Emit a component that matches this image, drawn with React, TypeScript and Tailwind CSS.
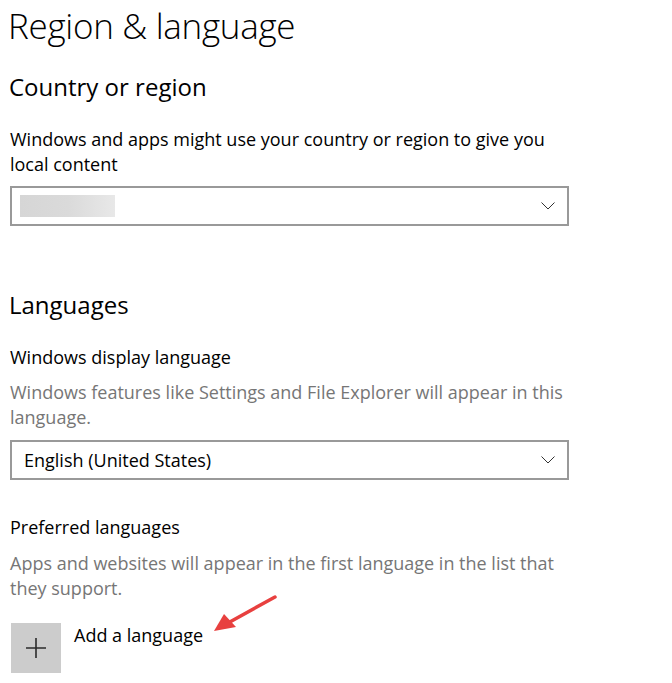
import React from 'react';

const font = { fontFamily: '"Open Sans", "Noto Sans", sans-serif' };

const Chevron = () => (
  <svg width="14" height="8" viewBox="0 0 14 8" className="shrink-0">
    <path d="M0.5 0.5 L7 7 L13.5 0.5" fill="none" stroke="#333" strokeWidth="1" />
  </svg>
);

const Dropdown: React.FC<{ children?: React.ReactNode }> = ({ children }) => (
  <div className="flex items-center justify-between w-[559px] h-[40px] border-2 border-[#999999] bg-white pl-[8px] pr-[12px]">
    <div className="flex items-center">{children}</div>
    <Chevron />
  </div>
);

export default function App() {
  return (
    <div className="relative w-[672px] h-[683px] bg-white overflow-hidden text-black" style={font}>
      <div className="pl-[10px] pt-[6px]">
        <h1 className="text-[35px] font-light leading-[40px] tracking-[-0.3px] ml-[-2px]">
          Region &amp; language
        </h1>

        <h2 className="mt-[25px] text-[24px] font-normal leading-[32px] ml-[-1px]">Country or region</h2>

        <p className="mt-[24px] text-[18px] leading-[25px] w-[560px]">
          Windows and apps might use your country or region to give you local content
        </p>
        <div className="mt-[9px]">
          <Dropdown>
            <div className="w-[95px] h-[22px] bg-gradient-to-r from-[#d6d6d6] via-[#dadada] to-[#e8e8e8]" />
          </Dropdown>
        </div>

        <h2 className="mt-[63px] text-[24px] font-normal leading-[32px] ml-[-1px]">Languages</h2>

        <p className="mt-[24px] text-[18px] leading-[25px]">Windows display language</p>
        <p className="mt-[10px] text-[18px] leading-[25px] text-[#767676] w-[560px]">
          Windows features like Settings and File Explorer will appear in this language.
        </p>
        <div className="mt-[10px]">
          <Dropdown>
            <span className="text-[18px] leading-[25px] pl-[4px]">English (United States)</span>
          </Dropdown>
        </div>

        <p className="mt-[35px] text-[18px] leading-[25px]">Preferred languages</p>
        <p className="mt-[11px] text-[18px] leading-[25px] text-[#767676] w-[560px]">
          Apps and websites will appear in the first language in the list that they support.
        </p>

        <div className="mt-[22px] flex items-start gap-[13px]">
          <div className="w-[50px] h-[50px] bg-[#cccccc] flex items-center justify-center ml-[1px]">
            <svg width="22" height="22" viewBox="0 0 22 22">
              <path d="M11 1 V21 M1 11 H21" stroke="#2b2b2b" strokeWidth="1.6" />
            </svg>
          </div>
          <span className="text-[18px] leading-[25px]">Add a language</span>
        </div>
      </div>

      {/* annotation arrow */}
      <svg className="absolute left-0 top-0 pointer-events-none" width="672" height="683">
        <line x1="275" y1="597" x2="228" y2="623" stroke="#e8403f" strokeWidth="3.5" strokeLinecap="round" />
        <polygon points="214,631 224,614 236,627" fill="#e8403f" />
      </svg>
    </div>
  );
}
